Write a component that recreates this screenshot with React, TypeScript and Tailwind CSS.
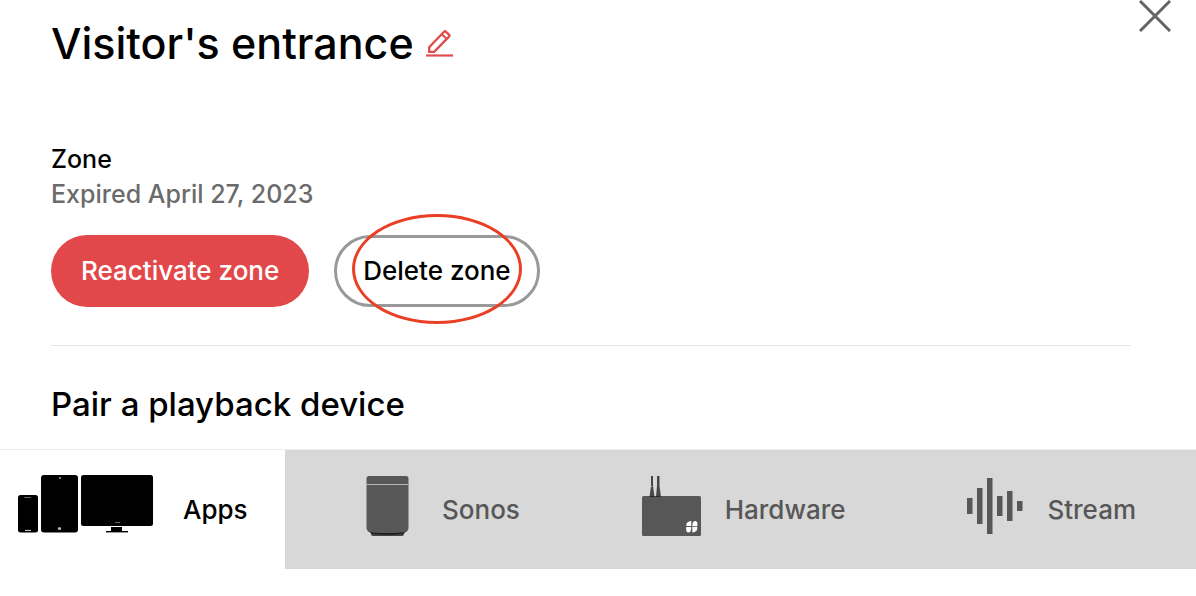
import { useState } from "react";
import type { ReactNode } from "react";
import clsx from "clsx";

function PencilIcon() {
  return (
    <svg width="27" height="28" viewBox="0 0 27 28" fill="none" stroke="#e24a4b" aria-hidden="true">
      <path d="M3.2 18.2 18 2.8Q19 1.8 20 2.8L23 5.6Q24 6.6 23 7.6L8.2 22.8H3.2Z" strokeWidth="2.3" />
      <path d="m15.6 5 5.2 5" strokeWidth="2" />
      <path d="M0 26.5h27" strokeWidth="2.2" />
    </svg>
  );
}

function CloseIcon() {
  return (
    <svg width="32" height="32" viewBox="0 0 32 32" fill="none" stroke="#646466" strokeWidth="3" aria-hidden="true">
      <path d="m1 1 30 30M31 1 1 31" />
    </svg>
  );
}

function AppsIcon() {
  return (
    <svg width="141" height="70" viewBox="0 0 141 70" aria-hidden="true">
      <rect x="0" y="20" width="20" height="37.5" rx="2.5" />
      <rect x="23" y="0" width="37" height="57.5" rx="3" />
      <rect x="63" y="0" width="72" height="51" rx="2.5" />
      <rect x="93" y="52" width="11" height="4.5" />
      <rect x="88" y="56" width="22" height="1.4" />
      <path d="M6 22.5h7M97 47.5h5" stroke="#666" />
      <path d="M7 55.4h6" stroke="#ddd" />
      <circle cx="42" cy="3" r="1" fill="#aaa" />
      <circle cx="41.5" cy="53.5" r="1.6" fill="#bbb" />
    </svg>
  );
}

function SonosIcon() {
  return (
    <svg width="52" height="68" viewBox="0 0 52 68" aria-hidden="true">
      <path d="M5 56h33v2q0 2-2 2H7q-2 0-2-2Z" fill="#444" />
      <path d="M2 54.5 5 57.5q16 2.5 33 0l3-3Z" fill="#1d1d1d" />
      <path d="M3 0h37q2.5 0 2.5 2.5V52q0 4-6 4.5-15 1-30 0Q.5 56 .5 52V2.5Q.5 0 3 0Z" fill="#575757" />
      <path d="M.5 8.5h42" stroke="#b5b5b5" />
    </svg>
  );
}

function HardwareIcon() {
  return (
    <svg width="59" height="68" viewBox="0 0 59 68" aria-hidden="true">
      <path d="M9 0h2v10l1.500 11h-5L9 10ZM15 0h2.500v10l1.500 11h-5l1-11Z" fill="#464646" />
      <path d="M9 10.500h1M11 12.500h1" stroke="#bdbdbd" />
      <rect x="0" y="20" width="59" height="40" rx="1.5" fill="#575757" />
      <path d="M7.500 20.500h5M13.500 20.500h5" stroke="#262626" />
      <g fill="#fff">
        <path d="M49.300 45v5h-5Q43.800 45.500 49.300 45Z" />
        <path d="M50.300 50.200q0-5.200 3-5.200 2.800.5 2 5.200Z" />
        <path d="M44.300 51h5q0 5.500-3 5.500-2.800-.5-2-5.500Z" />
        <path d="M50.300 51h5q.5 5-5 5.500Z" />
      </g>
    </svg>
  );
}

function StreamIcon() {
  return (
    <svg width="56" height="68" viewBox="0 0 56 68" fill="#575757" aria-hidden="true">
      <rect x="0" y="22" width="5.5" height="16" />
      <rect x="10" y="12" width="5.5" height="36" />
      <rect x="20" y="2" width="5.5" height="56" />
      <rect x="30" y="20" width="5.5" height="20" />
      <rect x="40" y="15" width="5.5" height="30" />
      <rect x="50" y="25" width="5.5" height="10" />
    </svg>
  );
}

type TabProps = {
  label: string;
  icon: ReactNode;
  active: boolean;
  onClick: () => void;
};

function Tab({ label, icon, active, onClick }: TabProps) {
  return (
    <button
      type="button"
      role="tab"
      aria-selected={active}
      onClick={onClick}
      className={clsx("flex h-full cursor-pointer items-center gap-6", active ? "text-black" : "text-[#575757]")}
    >
      {icon}
      {label}
    </button>
  );
}

const deviceTabs = [
  { label: "Sonos", icon: <SonosIcon /> },
  { label: "Hardware", icon: <HardwareIcon /> },
  { label: "Stream", icon: <StreamIcon /> },
];

export default function App() {
  const [selected, setSelected] = useState("Apps");

  return (
    <main className="bg-white font-['Inter',sans-serif] text-[26px] font-medium text-black">
      <header className="flex items-start justify-between pr-[25px] pl-[51px]">
        <div className="flex items-center gap-3 pt-[15px]">
          <h1 className="text-[43px] leading-[56px]">Visitor's entrance</h1>
          <button type="button" aria-label="Edit zone name" className="cursor-pointer">
            <PencilIcon />
          </button>
        </div>
        <button type="button" aria-label="Close" className="cursor-pointer">
          <CloseIcon />
        </button>
      </header>

      <section className="mr-[65px] ml-[51px] border-b border-[#e5e5e5] pt-[71px] pb-[38px]">
        <h2 className="text-[25px] leading-[35px]">Zone</h2>
        <p className="text-[25px] leading-[35px] text-[#6b6b6b]">Expired April 27, 2023</p>
        <div className="flex gap-[25px] pt-[23px]">
          <button type="button" className="h-[72px] cursor-pointer rounded-full bg-[#e2484a] px-[30px] pb-0.5 text-white">
            Reactivate zone
          </button>
          <button type="button" className="relative h-[72px] cursor-pointer rounded-full border-3 border-[#999] px-[26px] pb-0.5">
            Delete zone
            <span className="pointer-events-none absolute inset-x-[15px] -top-6 -bottom-5 rounded-[50%] border-3 border-[#eb3f25]" />
          </button>
        </div>
      </section>

      <section>
        <h2 className="pt-[34px] pb-[21px] pl-[51px] text-[33px] leading-[48px]">Pair a playback device</h2>
        <div role="tablist" className="flex h-[120px] border-t border-[#ebebeb]">
          <div className="w-[285px] shrink-0 pl-[18px]">
            <Tab label="Apps" icon={<AppsIcon />} active={selected === "Apps"} onClick={() => setSelected("Apps")} />
          </div>
          <div className="flex flex-1 justify-between bg-[#d8d8d8] pr-15 pl-[81px]">
            {deviceTabs.map((tab) => (
              <Tab
                key={tab.label}
                label={tab.label}
                icon={tab.icon}
                active={selected === tab.label}
                onClick={() => setSelected(tab.label)}
              />
            ))}
          </div>
        </div>
      </section>
    </main>
  );
}
